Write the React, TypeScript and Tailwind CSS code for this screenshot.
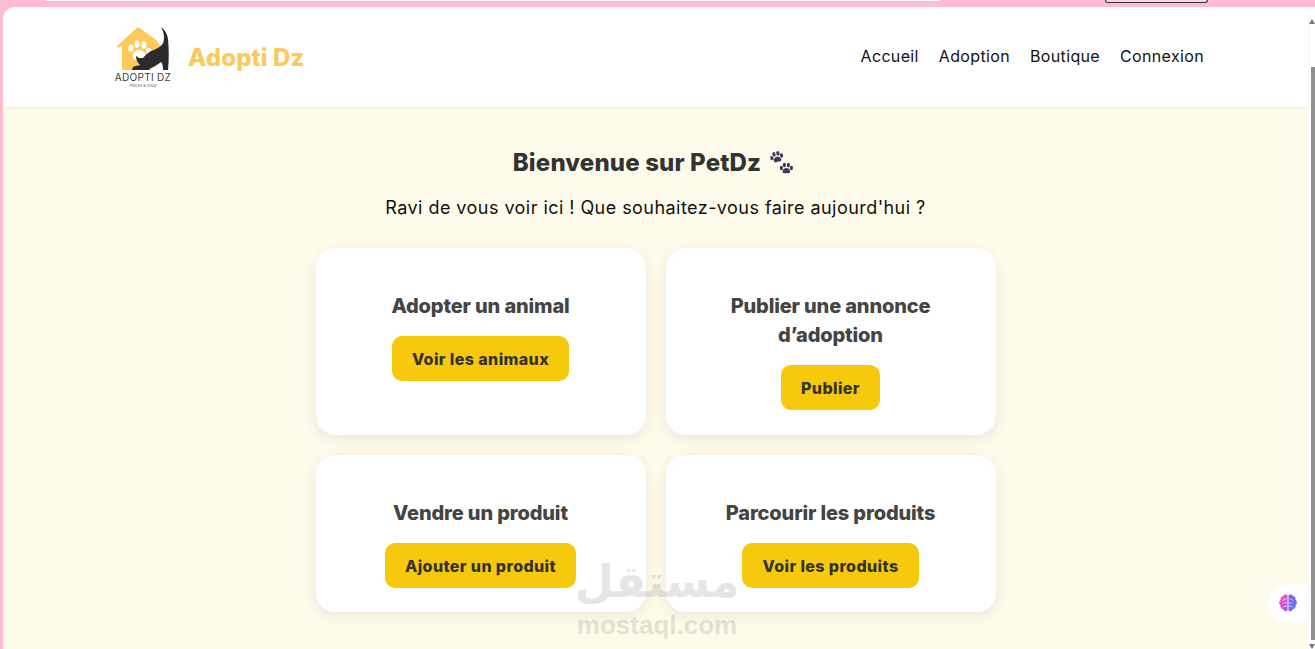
import React from 'react';

const poppins = 'font-["Inter","Liberation_Sans",sans-serif]';

const Logo = () => (
  <div className="w-[60px] flex flex-col items-center">
    <svg width="60" height="46" viewBox="0 0 60 46">
      <path d="M25 2 L4 21 L5 23 L9 21 V45 H37 L50 36 V24 L43 15 L42 14 L25 2Z" fill="#fdc95a" />
      <g fill="#fff">
        <ellipse cx="18" cy="23" rx="2.6" ry="3.6" />
        <ellipse cx="24" cy="19" rx="2.6" ry="3.8" />
        <ellipse cx="31" cy="20" rx="2.6" ry="3.8" />
        <ellipse cx="35.5" cy="26" rx="2.4" ry="3.2" />
        <path d="M26 25 C21 25 18.5 30 20 33 C21 36 25 34 27 35 C31 37 34 34 33 31 C32 28 30 25 26 25Z" />
      </g>
      <path
        d="M48 2 C52 5 54.5 9 55 14 C56 24 56 35 55 45 L50 45 C50 41 49.5 39 48 37 C44 40 40 42 36 44 L37 45 L19 45 L20 42 C23 41 25 40.5 27 40 C24 37 23 34 23 31 L26 33 L30 33 C33 29 37 26 41 25 C45 23 49 21 50.5 17 C51.5 12 51 7 48 2Z"
        fill="#2b2b2e"
      />
    </svg>
    <div className='text-[10px] leading-[12px] tracking-[0.3px] text-[#3a3a3c] whitespace-nowrap font-["Inter",sans-serif]'>ADOPTI DZ</div>
    <div className='text-[4px] leading-[6px] text-[#666] whitespace-nowrap font-["Inter",sans-serif]'>Petcss & Shop</div>
  </div>
);

const Paws = () => (
  <svg width="25" height="25" viewBox="0 0 25 25" fill="#3d3a58">
    <g transform="rotate(-15 7 7)">
      <ellipse cx="3" cy="6" rx="1.6" ry="2.2" />
      <ellipse cx="6" cy="3" rx="1.6" ry="2.3" />
      <ellipse cx="10" cy="3" rx="1.6" ry="2.3" />
      <ellipse cx="13" cy="6" rx="1.6" ry="2.2" />
      <path d="M8 6 C5 6 3.5 9 4.5 10.5 C5.5 12 7 11 8 11 C9 11 10.5 12 11.5 10.5 C12.5 9 11 6 8 6Z" />
    </g>
    <g transform="translate(10 11)">
      <ellipse cx="2.4" cy="6" rx="1.6" ry="2.2" />
      <ellipse cx="5.4" cy="3" rx="1.6" ry="2.3" />
      <ellipse cx="9.4" cy="3" rx="1.6" ry="2.3" />
      <ellipse cx="12.4" cy="6" rx="1.6" ry="2.2" />
      <path d="M7.4 6 C4.4 6 2.9 9 3.9 10.5 C4.9 12 6.4 11 7.4 11 C8.4 11 9.9 12 10.9 10.5 C11.9 9 10.4 6 7.4 6Z" />
    </g>
  </svg>
);

const Brain = () => (
  <svg width="20" height="20" viewBox="0 0 20 20">
    <defs>
      <linearGradient id="brainLeft" x1="0" y1="0" x2="1" y2="1">
        <stop offset="0" stopColor="#f5b13c" />
        <stop offset="0.35" stopColor="#e655c8" />
        <stop offset="1" stopColor="#b04fe0" />
      </linearGradient>
      <linearGradient id="brainRight" x1="0" y1="0" x2="1" y2="1">
        <stop offset="0" stopColor="#8a5be8" />
        <stop offset="0.7" stopColor="#6a6cf0" />
        <stop offset="1" stopColor="#3cc8f0" />
      </linearGradient>
    </defs>
    <path d="M9.5 2 C7.5 0.8 5.5 1.5 5 3 C3 3.2 2 5 2.6 6.5 C0.6 7.8 0.6 11 2.4 12.2 C2 14.5 3.5 16 5 16 C5.6 18 8 18.8 9.5 17.6Z" fill="url(#brainLeft)" />
    <path d="M10.5 2 C12.5 0.8 14.5 1.5 15 3 C17 3.2 18 5 17.4 6.5 C19.4 7.8 19.4 11 17.6 12.2 C18 14.5 16.5 16 15 16 C14.4 18 12 18.8 10.5 17.6Z" fill="url(#brainRight)" />
    <g stroke="#fff" strokeWidth="0.7" fill="none" opacity="0.8">
      <path d="M9 6 H6 L4.5 8 M9 10 H5.5 M9 13 H6.5 L5.5 14.5" />
      <path d="M11 6 H14 L15.5 8 M11 10 H14.5 M11 13 H13.5 L14.5 14.5" />
    </g>
  </svg>
);

const ActionCard = ({ title, action }: { title: string[]; action: string }) => (
  <div className="bg-white rounded-[20px] shadow-[0_4px_15px_rgba(0,0,0,0.08)] flex flex-col items-center pt-[44px] pb-[24px]">
    <h3 className={`${poppins} text-[20px] leading-[29px] font-extrabold tracking-[-0.15px] text-[#444] text-center`}>
      {title.map((line) => (
        <div key={line}>{line}</div>
      ))}
    </h3>
    <button className={`${poppins} mt-[15px] h-[45px] px-5 rounded-[10px] bg-[#f7c90d] text-[16px] font-extrabold tracking-[0.4px] text-[#333]`}>
      {action}
    </button>
  </div>
);

export default function App() {
  return (
    <div className="relative h-[649px] w-[1315px] overflow-hidden bg-[#ffbcd4]">
      {/* bout de la barre du navigateur au dessus */}
      <div className="h-[7px] flex items-start">
        <div className="ml-[45px] w-[895px] h-[2px] bg-white border-b border-[#d9c6ce] rounded-b-md" />
        <div className="ml-[165px] w-[103px] h-[3px] bg-[#fbd5e3] border-b border-x border-[#333] rounded-b-md" />
      </div>

      <div className="ml-[3px] h-[642px] flex rounded-tl-xl overflow-hidden bg-white">
        <div className="w-[1305px] flex flex-col">
          <header className="h-[100px] shrink-0 bg-white shadow-[0_1px_4px_rgba(0,0,0,0.06)] z-10 flex items-center justify-between pl-[110px] pr-[104px]">
            <div className="flex items-center gap-[15px]">
              <Logo />
              <span className={`${poppins} mt-[2px] text-[24px] font-extrabold tracking-[0.1px] text-[#fdc95a]`}>Adopti Dz</span>
            </div>
            <nav className={`${poppins} flex gap-5 text-[16px] tracking-[0.35px] text-[#111] mb-[2px]`}>
              <a>Accueil</a>
              <a>Adoption</a>
              <a>Boutique</a>
              <a>Connexion</a>
            </nav>
          </header>

          <main className="flex-1 bg-[#fffbea] flex flex-col items-center pt-[38px]">
            <h1 className={`${poppins} mr-[4px] h-9 flex items-center gap-2 text-[24px] font-extrabold tracking-[0.15px] text-[#333]`}>
              Bienvenue sur PetDz <Paws />
            </h1>
            <p className={`${poppins} mt-[14px] text-[18px] leading-[26px] tracking-[0.45px] text-[#111]`}>
              Ravi de vous voir ici ! Que souhaitez-vous faire aujourd'hui ?
            </p>
            <div className="mt-[27px] grid grid-cols-[330px_330px] grid-rows-[187px_157px] gap-5">
              <ActionCard title={['Adopter un animal']} action="Voir les animaux" />
              <ActionCard title={['Publier une annonce', 'd’adoption']} action="Publier" />
              <ActionCard title={['Vendre un produit']} action="Ajouter un produit" />
              <ActionCard title={['Parcourir les produits']} action="Voir les produits" />
            </div>
          </main>
        </div>

        {/* barre de defilement */}
        <div className="flex-1 bg-white flex flex-col items-end pt-[12px]">
          <div className="w-0 h-0 border-x-[3px] border-x-transparent border-b-[5px] border-b-[#777]" />
          <div className="mt-[43px] w-[4px] h-[576px] bg-[#8f8f8f]" />
          <div className="mt-[4px] w-0 h-0 border-x-[3px] border-x-transparent border-t-[5px] border-t-[#777]" />
        </div>
      </div>

      {/* widget en bas a droite */}
      <div className="absolute left-[1268px] top-[585px] w-[40px] h-[36px] bg-white rounded-l-full flex items-center justify-end pr-[10px]">
        <Brain />
      </div>

      {/* filigrane */}
      <div className="absolute left-[578px] top-[552px] w-[158px] flex flex-col items-center pointer-events-none text-[#3c3c3c] opacity-[0.13]">
        <div className='h-[60px] text-[45px] leading-[60px] font-bold font-["DejaVu_Sans",sans-serif]' dir="rtl">مستقل</div>
        <div className='text-[26px] leading-[26px] font-bold font-["Liberation_Sans",sans-serif]'>mostaql.com</div>
      </div>
    </div>
  );
}
